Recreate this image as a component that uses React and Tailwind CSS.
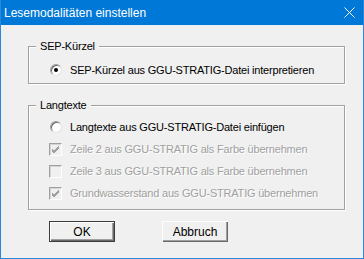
import React from 'react';

const font = { fontFamily: '"Liberation Sans", Arial, sans-serif' };

function Radio({ checked }) {
  return (
    <span className="relative w-[12px] h-[12px] rounded-full bg-white border border-[#a0a0a0] border-r-[#e3e3e3] border-b-[#e3e3e3] shadow-[inset_1px_1px_0_#696969] flex items-center justify-center shrink-0">
      {checked && <span className="w-[4px] h-[4px] rounded-full bg-black" />}
    </span>
  );
}

function Checkbox({ checked }) {
  return (
    <span className="w-[13px] h-[13px] bg-[#f0f0f0] border border-[#a0a0a0] border-r-white border-b-white shadow-[inset_1px_1px_0_#d4d4d4] flex items-center justify-center shrink-0">
      {checked && (
        <svg width="9" height="9" viewBox="0 0 9 9">
          <path d="M1 4 L3 6 L8 1 M1 5 L3 7 L8 2 M1 6 L3 8 L8 3" stroke="#a0a0a0" strokeWidth="1" fill="none" />
        </svg>
      )}
    </span>
  );
}

function Group({ label, className, children }) {
  return (
    <div className={`relative ml-[27px] w-[317px] border border-[#a0a0a0] shadow-[1px_1px_0_#fff,inset_1px_1px_0_#fff] ${className}`}>
      <span className="absolute -top-[9px] left-[7px] bg-[#f0f0f0] px-[4px] text-[11px] tracking-[-0.2px] leading-[16px] text-black whitespace-nowrap">
        {label}
      </span>
      {children}
    </div>
  );
}

function Row({ control, text, disabled }) {
  return (
    <div className="flex items-center h-[22px] pl-[20px] gap-[8px]">
      {control}
      <span
        className={`text-[11px] tracking-[-0.2px] leading-[16px] whitespace-nowrap ${
          disabled ? 'text-[#a0a0a0] [text-shadow:1px_1px_0_#fff]' : 'text-black'
        }`}
      >
        {text}
      </span>
    </div>
  );
}

function Button({ label, primary }) {
  return (
    <button
      className={`w-[66px] h-[21px] bg-[#f0f0f0] text-[12px] text-black flex items-center justify-center ${
        primary
          ? 'border border-[#3c3c3c] shadow-[inset_1px_1px_0_#fff,inset_-1px_-1px_0_#696969,inset_-2px_-2px_0_#a0a0a0]'
          : 'shadow-[inset_1px_1px_0_#fff,inset_-1px_-1px_0_#696969,inset_-2px_-2px_0_#a0a0a0]'
      }`}
    >
      {label}
    </button>
  );
}

export default function App() {
  return (
    <div
      className="w-[364px] h-[259px] flex flex-col bg-[#f0f0f0] border-x border-b border-[#2b87d7] overflow-hidden"
      style={font}
    >
      <div className="h-[25px] bg-[#0078d7] flex items-center justify-between pl-[4px] pr-[9px] -mx-px shrink-0">
        <span className="text-white text-[12px]">Lesemodalitäten einstellen</span>
        <svg width="11" height="11" viewBox="0 0 11 11">
          <path d="M0.5 0.5 L10.5 10.5 M10.5 0.5 L0.5 10.5" stroke="#fff" strokeWidth="1" />
        </svg>
      </div>

      <Group label="SEP-Kürzel" className="mt-[21px] h-[38px] pt-[15px]">
        <div className="flex items-center h-[16px] pl-[21px] gap-[8px]">
          <Radio checked />
          <span className="text-[11px] tracking-[-0.2px] leading-[16px] text-black whitespace-nowrap">SEP-Kürzel aus GGU-STRATIG-Datei interpretieren</span>
        </div>
      </Group>

      <Group label="Langtexte" className="mt-[21px] h-[105px] pt-[10px]">
        <div className="flex items-center h-[22px] pl-[21px] gap-[8px]">
          <Radio />
          <span className="text-[11px] tracking-[-0.2px] leading-[16px] text-black whitespace-nowrap">Langtexte aus GGU-STRATIG-Datei einfügen</span>
        </div>
        <Row control={<Checkbox checked />} text="Zeile 2 aus GGU-STRATIG als Farbe übernehmen" disabled />
        <Row control={<Checkbox />} text="Zeile 3 aus GGU-STRATIG als Farbe übernehmen" disabled />
        <Row control={<Checkbox checked />} text="Grundwasserstand aus GGU-STRATIG übernehmen" disabled />
      </Group>

      <div className="flex mt-[11px] ml-[48px] gap-[47px]">
        <Button label="OK" primary />
        <Button label="Abbruch" />
      </div>
    </div>
  );
}
